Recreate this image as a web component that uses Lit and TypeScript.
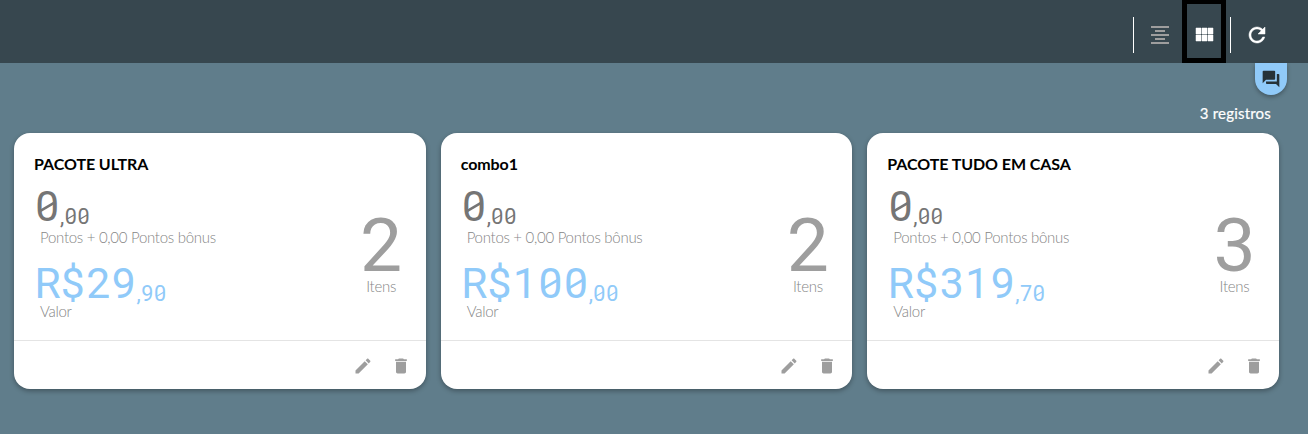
import { LitElement, html, css, svg } from "lit";
import { customElement, property } from "lit/decorators.js";

const ICONS: Record<string, string> = {
  align: "M7 15v2h10v-2H7zm-4 6h18v-2H3v2zm0-8h18v-2H3v2zm4-6v2h10V7H7zM3 3v2h18V3H3z",
  module: "M4 11h5V5H4v6zm0 7h5v-6H4v6zm6 0h5v-6h-5v6zm6 0h5v-6h-5v6zm-6-7h5V5h-5v6zm6-6v6h5V5h-5z",
  refresh:
    "M17.65 6.35C16.2 4.9 14.21 4 12 4c-4.42 0-7.99 3.58-7.99 8s3.57 8 7.99 8c3.73 0 6.84-2.55 7.73-6h-2.08c-.82 2.33-3.04 4-5.65 4-3.31 0-6-2.69-6-6s2.69-6 6-6c1.66 0 3.14.69 4.22 1.78L13 11h7V4l-2.35 2.35z",
  forum:
    "M21 6h-2v9H6v2c0 .55.45 1 1 1h11l4 4V7c0-.55-.45-1-1-1zm-4 6V3c0-.55-.45-1-1-1H3c-.55 0-1 .45-1 1v14l4-4h10c.55 0 1-.45 1-1z",
  edit: "M3 17.25V21h3.75L17.81 9.94l-3.75-3.75L3 17.25zM20.71 7.04c.39-.39.39-1.02 0-1.41l-2.34-2.34c-.39-.39-1.02-.39-1.41 0l-1.83 1.83 3.75 3.75 1.83-1.83z",
  trash: "M6 19c0 1.1.9 2 2 2h8c1.1 0 2-.9 2-2V7H6v12zM19 4h-3.5l-1-1h-5l-1 1H5v2h14V4z",
};

const icon = (name: string, size = 24) =>
  html`<svg class=${name} width=${size} height=${size} viewBox="0 0 24 24" fill="currentColor">${svg`<path d=${ICONS[name]}></path>`}</svg>`;

interface Pack {
  name: string;
  points: string;
  bonus: string;
  value: string;
  items: number;
}

const PACKS: Pack[] = [
  { name: "PACOTE ULTRA", points: "0,00", bonus: "0,00", value: "R$29,90", items: 2 },
  { name: "combo1", points: "0,00", bonus: "0,00", value: "R$100,00", items: 2 },
  { name: "PACOTE TUDO EM CASA", points: "0,00", bonus: "0,00", value: "R$319,70", items: 3 },
];

/* Amount set in fixed-width cells, with slashed zeros and small cents. */
@customElement("mono-amount")
class MonoAmount extends LitElement {
  @property() value = "";

  static styles = css`
    :host {
      display: flex;
      align-items: baseline;
      height: 50px;
      line-height: 50px;
      font-family: Roboto, sans-serif;
      font-weight: 400;
      font-size: 42.5px;
      padding-left: 0.5px;
    }
    .cents {
      font-size: 21.5px;
      display: flex;
      position: relative;
      top: 3px;
    }
    .whole {
      display: flex;
    }
    .cell {
      width: 0.6em;
      text-align: center;
      position: relative;
    }
    .slash {
      position: absolute;
      left: 0.14em;
      top: calc(25px - 0.28em);
      width: 0.32em;
      height: 0.56em;
      overflow: visible;
    }
  `;

  private cells(text: string) {
    return [...text].map(
      (c) => html`<span class="cell">${c}${c === "0"
        ? html`<svg class="slash" viewBox="0 0 32 56"><path d="M-1 38.5 33 18.5" stroke="currentColor" stroke-width="6"></path></svg>`
        : ""}</span>`
    );
  }

  render() {
    const [whole, cents] = this.value.split(",");
    return html`<span class="whole">${this.cells(whole)}</span><span class="cents"><span>,</span>${this.cells(cents)}</span>`;
  }
}

@customElement("pack-card")
class PackCard extends LitElement {
  @property({ attribute: false }) pack!: Pack;

  static styles = css`
    :host {
      display: flex;
      flex-direction: column;
      height: 256px;
      box-sizing: border-box;
      background: #fff;
      border-radius: 16px;
      box-shadow: 0 2px 5px rgba(0, 0, 0, 0.32);
      color: #9e9e9e;
      font: 300 15px/18px Lato, sans-serif;
    }
    .title {
      padding: 21px 20px 1px;
      font-weight: 700;
      font-size: 16px;
      line-height: 20px;
      letter-spacing: -0.08px;
      color: #000;
      white-space: nowrap;
    }
    .body {
      display: flex;
      justify-content: space-between;
      height: 165px;
      padding: 0 14.5px 0 20px;
    }
    .points {
      color: #757575;
      margin-top: 7px;
    }
    .value {
      color: #90caf9;
      margin-top: 13px;
    }
    .label {
      padding-left: 6px;
      white-space: nowrap;
      color: #868686;
      letter-spacing: -0.28px;
    }
    .up {
      margin-top: -4px;
    }
    .up2 {
      margin-top: -7px;
    }
    .items {
      width: 60px;
      padding-top: 30px;
      text-align: center;
    }
    .count {
      font: 400 75px/80px Roboto, sans-serif;
      height: 72px;
    }
    .items .label {
      padding: 0;
    }
    .footer {
      border-top: 1px solid #e4e4e4;
      flex: 1;
      display: flex;
      align-items: center;
      justify-content: flex-end;
      gap: 18px;
      padding: 1px 14.9px 0 0;
    }
    svg {
      display: block;
    }
  `;

  render() {
    const p = this.pack;
    return html`
      <div class="title">${p.name}</div>
      <div class="body">
        <div>
          <mono-amount class="points" .value=${p.points}></mono-amount>
          <div class="label up">Pontos + ${p.bonus} Pontos bônus</div>
          <mono-amount class="value" .value=${p.value}></mono-amount>
          <div class="label up2">Valor</div>
        </div>
        <div class="items">
          <div class="count">${p.items}</div>
          <div class="label">Itens</div>
        </div>
      </div>
      <div class="footer">${icon("edit", 20)}${icon("trash", 20)}</div>
    `;
  }
}

@customElement("app-root")
class AppRoot extends LitElement {
  static styles = css`
    :host {
      display: block;
      height: 434px;
      background: #607d8b;
      overflow: hidden;
      font-family: Lato, sans-serif;
    }
    svg {
      display: block;
    }
    .bar {
      height: 63px;
      background: #37474f;
      display: flex;
      justify-content: flex-end;
      align-items: center;
      padding-right: 39px;
      color: #fff;
    }
    .rule {
      width: 1px;
      height: 36px;
      margin-top: 7px;
      background: #fff;
    }
    .btn {
      padding-top: 7px;
    }
    .quiet {
      color: #9e9e9e;
      margin: 0 10px 0 14px;
    }
    .active {
      box-sizing: border-box;
      width: 44px;
      height: 63px;
      border: 5px solid #000;
      border-top-width: 4px;
      padding: 19px 0 0 5px;
      margin-right: 4px;
    }
    .module {
      stroke: #fff;
      stroke-width: 0.5;
    }
    .reload {
      margin-left: 14px;
    }
    .refresh {
      stroke: #fff;
      stroke-width: 0.5;
    }
    .tab {
      box-sizing: border-box;
      width: 32px;
      height: 32px;
      margin-left: auto;
      margin-right: 21px;
      border-radius: 0 0 16px 16px;
      background: #90caf9;
      color: #263238;
      padding: 6px;
      box-shadow: 0 2px 4px rgba(0, 0, 0, 0.3);
    }
    .total {
      height: 38px;
      line-height: 37px;
      padding-right: 37px;
      text-align: right;
      font-size: 15px;
      letter-spacing: 0.2px;
      color: #fff;
      -webkit-text-stroke: 0.2px #fff;
    }
    .grid {
      display: grid;
      grid-template-columns: repeat(3, 1fr);
      gap: 15px;
      padding: 0 29px 0 14px;
    }
  `;

  render() {
    return html`
      <div class="bar">
        <span class="rule"></span>
        <span class="btn quiet">${icon("align")}</span>
        <span class="active">${icon("module")}</span>
        <span class="rule"></span>
        <span class="btn reload">${icon("refresh")}</span>
      </div>
      <div class="tab">${icon("forum", 20)}</div>
      <div class="total">${PACKS.length} registros</div>
      <div class="grid">${PACKS.map((p) => html`<pack-card .pack=${p}></pack-card>`)}</div>
    `;
  }
}
